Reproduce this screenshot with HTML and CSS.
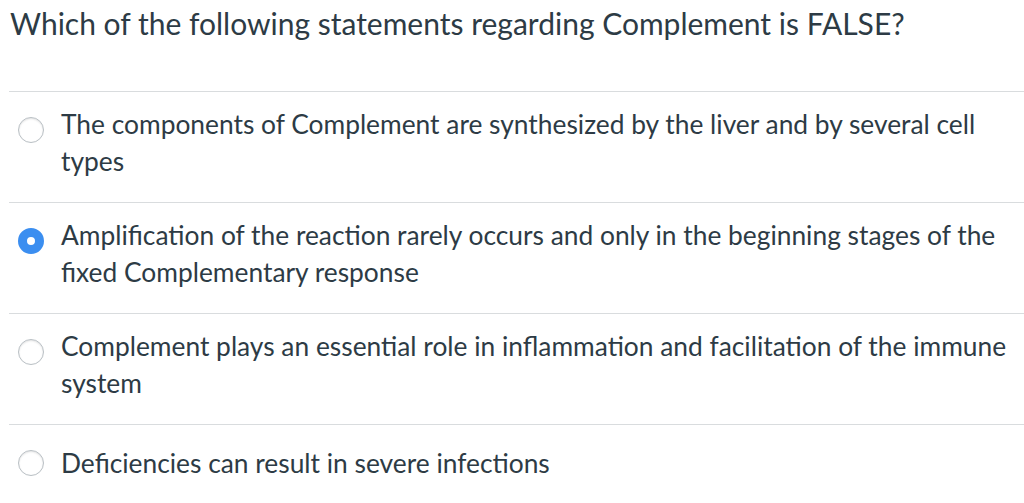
FILE: index.html
```html
<!DOCTYPE html>
<html>
<head>
<meta charset="utf-8">
<link rel="stylesheet" href="styles.css">
</head>
<body>
<div class="question">
  <div class="question-text">Which of the following statements regarding Complement is FALSE?</div>
  <div class="answers">
    <div class="answer">
      <span class="radio"></span>
      <div class="answer-text">The components of Complement are synthesized by the liver and by several cell types</div>
    </div>
    <div class="answer">
      <span class="radio checked"></span>
      <div class="answer-text">Amplification of the reaction rarely occurs and only in the beginning stages of the fixed Complementary response</div>
    </div>
    <div class="answer">
      <span class="radio"></span>
      <div class="answer-text">Complement plays an essential role in inflammation and facilitation of the immune system</div>
    </div>
    <div class="answer answer-last">
      <span class="radio"></span>
      <div class="answer-text">Deficiencies can result in severe infections</div>
    </div>
  </div>
</div>
</body>
</html>
```

FILE: styles.css
```css
html, body {
  margin: 0;
  padding: 0;
  background: #ffffff;
  overflow: hidden;
}
body {
  font-family: Lato, "Open Sans", sans-serif;
  color: #2d3b45;
}
.question {
  padding-left: 9px;
}
.question-text {
  font-size: 30px;
  line-height: 36px;
  height: 91px;
  padding-top: 5px;
  box-sizing: border-box;
  padding-left: 1px;
}
.answers {
  display: flex;
  flex-direction: column;
}
.answer {
  border-top: 1px solid #d9dcde;
  height: 111px;
  box-sizing: border-box;
  display: flex;
  align-items: flex-start;
  padding-top: 14px;
}
.answer-last {
  height: 79px;
  padding-top: 20px;
}
.radio {
  flex: none;
  width: 26px;
  height: 26px;
  border-radius: 50%;
  border: 1px solid #b9bfc4;
  box-sizing: border-box;
  margin-left: 9px;
  margin-top: 11px;
  margin-right: 17px;
  background: #fff;
  box-shadow: inset 0 1px 2px rgba(0,0,0,0.12);
}
.answer-last .radio {
  margin-top: 5px;
}
.radio.checked {
  border: 9px solid #3b8ef0;
  box-shadow: none;
  background: #fff;
}
.answer-text {
  font-size: 26.35px;
  line-height: 37px;
  padding-right: 12px;
}
```
